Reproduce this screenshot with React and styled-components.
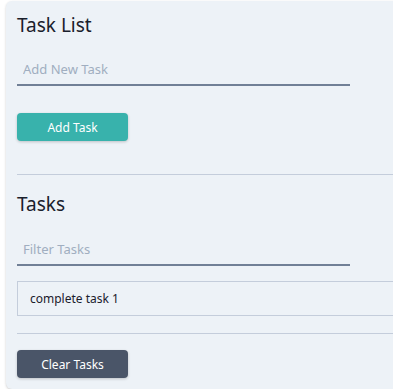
import React from 'react';
import styled, { createGlobalStyle } from 'styled-components';

const GlobalStyle = createGlobalStyle`
    html, body {
        margin: 0;
        padding: 0;
        background: #ffffff;
        overflow: hidden;
    }
    body {
        font-family: "Noto Sans", "Open Sans", sans-serif;
    }
`;

const Card = styled.div`
    width: 430px;
    margin: 1px 0 0 6px;
    padding: 0 0 11px 11px;
    background-color: #edf2f7;
    border-radius: 6px;
    box-shadow: 0 1px 3px rgba(0, 0, 0, 0.12), 0 1px 2px rgba(0, 0, 0, 0.08);
`;

const Section = styled.div`
    padding-top: ${props => props.$top}px;
    display: flex;
    flex-direction: column;
    align-items: flex-start;
`;

const Heading = styled.h2`
    margin: 0;
    font-size: 19px;
    font-weight: 400;
    line-height: 26px;
    color: #1a202c;
`;

const TextInput = styled.input`
    width: 333px;
    box-sizing: border-box;
    margin-top: ${props => props.$gap}px;
    padding: 6px;
    border: none;
    border-bottom: 2px solid #718096;
    background: transparent;
    font-family: inherit;
    font-size: 13px;
    line-height: 18px;
    color: #2d3748;
    outline: none;

    &::placeholder {
        color: #a0aec0;
    }
`;

const Button = styled.button`
    width: 111px;
    height: 28px;
    margin-top: ${props => props.$gap}px;
    border: none;
    border-radius: 4px;
    background-color: ${props => props.$color};
    color: #ffffff;
    font-family: inherit;
    font-size: 12px;
    box-shadow: 0 1px 3px rgba(0, 0, 0, 0.2);
    cursor: pointer;
`;

const Divider = styled.hr`
    align-self: stretch;
    margin: ${props => props.$top}px 0 0;
    border: none;
    border-top: 1px solid #c4cddb;
`;

const TaskList = styled.ul`
    list-style: none;
    margin: 15px 0 0;
    padding: 0;
    align-self: stretch;
`;

const TaskItem = styled.li`
    height: 35px;
    box-sizing: border-box;
    display: flex;
    align-items: center;
    padding-left: 12px;
    border: 1px solid #c4cddb;
    font-size: 12px;
    color: #1a202c;
`;

const App = () => {
    return (
        <>
            <GlobalStyle />
            <Card>
                <Section $top={11}>
                    <Heading>Task List</Heading>
                    <TextInput $gap={16} placeholder="Add New Task" />
                    <Button $gap={27} $color="#38b2ac">Add Task</Button>
                </Section>
                <Divider $top={33} />
                <Section $top={16}>
                    <Heading>Tasks</Heading>
                    <TextInput $gap={17} placeholder="Filter Tasks" />
                    <TaskList>
                        <TaskItem>complete task 1</TaskItem>
                    </TaskList>
                    <Divider $top={17} />
                    <Button $gap={16} $color="#4a5568">Clear Tasks</Button>
                </Section>
            </Card>
        </>
    );
};

export default App;
